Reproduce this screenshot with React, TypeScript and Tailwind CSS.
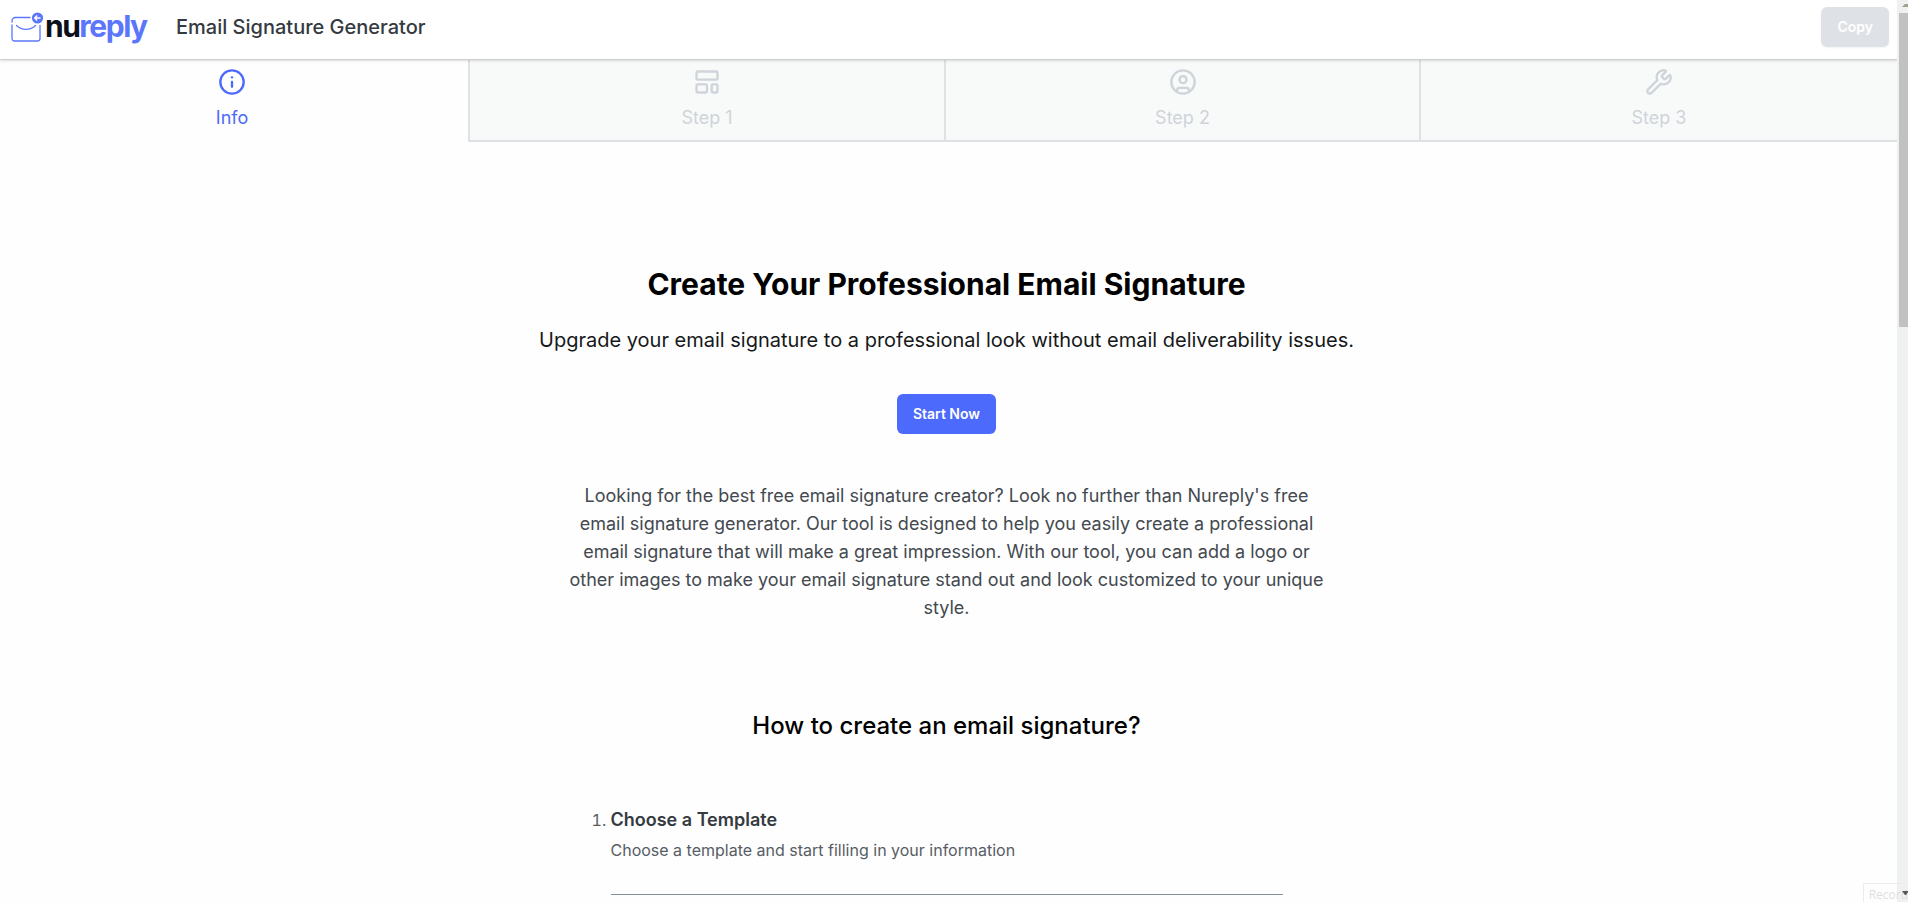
import { CircleUser, Info, LayoutTemplate, Wrench, type LucideIcon } from "lucide-react";

type Step = { label: string; icon: LucideIcon };

const steps: Step[] = [
  { label: "Info", icon: Info },
  { label: "Step 1", icon: LayoutTemplate },
  { label: "Step 2", icon: CircleUser },
  { label: "Step 3", icon: Wrench },
];

function Logo() {
  return (
    <a href="#" aria-label="nureply" className="block">
      <svg width="144" height="48" viewBox="0 0 144 48" fill="none">
        <g transform="translate(1 6)">
          <g stroke="#5b76fb" strokeWidth="1.3" strokeLinecap="round">
            <path d="M1 10V9a3.500 3.500 0 0 1 3.500-3.500H19" />
            <path d="M1 13v13.500a2.500 2.500 0 0 0 2.500 2.500h23a2.500 2.500 0 0 0 2.500-2.500V13.500" />
            <path d="M5.500 13.500c5.500 5.200 13.500 5.200 19 0" />
          </g>
          <circle cx="26.500" cy="6" r="5.600" fill="#5b76fb" />
          <path d="M29.500 6h-5.500M26.200 3.500L23.700 6l2.500 2.500" stroke="#fff" strokeWidth="1.400" />
        </g>
        <text
          x="35"
          y="31"
          className="text-3xl font-bold tracking-tighter"
          fontFamily="Inter, sans-serif"
          fill="#0b0f1c"
        >
          nu<tspan fill="#5b76fb">reply</tspan>
        </text>
      </svg>
    </a>
  );
}

function Header() {
  return (
    <header className="relative z-10 flex h-[60px] shrink-0 items-center border-b border-[#cdcfd1] bg-white pr-2 pl-[10px] shadow-sm">
      <Logo />
      <h1 className="ml-[22px] pb-1.5 text-xl font-medium text-[#343a40]">Email Signature Generator</h1>
      <button
        type="button"
        disabled
        className="mb-1.5 ml-auto h-10 rounded-md bg-[#dee2e6] px-4 text-sm font-semibold text-white shadow-xs"
      >
        Copy
      </button>
    </header>
  );
}

function StepTabs() {
  return (
    <nav className="grid shrink-0 grid-cols-[468fr_476fr_475fr_478fr]">
      {steps.map(({ label, icon: Icon }, index) => (
        <button
          key={label}
          type="button"
          className={
            index === 0
              ? "flex h-[82px] flex-col items-center gap-2 pt-2 pr-1 text-lg font-normal text-[#4c6afb]"
              : "flex h-[82px] flex-col items-center gap-2 border-b-2 border-l-2 border-[#dee2e6] bg-[#f8faf9] pt-2 text-lg font-normal text-[#ced4da]"
          }
        >
          <Icon size={28} />
          {label}
        </button>
      ))}
    </nav>
  );
}

function Scrollbar() {
  return (
    <div className="flex w-[11px] shrink-0 flex-col items-end bg-[#eff1f0]">
      <svg width="9" height="13" viewBox="0 0 9 13">
        <path d="M3 7h6V4H6z" fill="#a3a08c" />
      </svg>
      <div className="h-[314px] w-[9px] bg-[#c1c1c1]" />
      <svg className="relative z-20 mt-auto" width="9" height="13" viewBox="0 0 9 13">
        <path d="M3 2h6v1L7 6H6z" fill="#55555a" />
      </svg>
    </div>
  );
}

export default function App() {
  return (
    <div className="relative flex h-screen overflow-hidden bg-[#fefefe] font-['Inter',sans-serif]">
      <div className="flex min-w-0 flex-1 flex-col overflow-hidden">
        <Header />
        <StepTabs />
        <main className="flex flex-col items-center pt-[120px] pr-1 text-center">
          <h2 className="text-3xl leading-[44px] font-bold text-black">
            Create Your Professional Email Signature
          </h2>
          <p className="mt-[18px] text-xl leading-8 font-normal text-[#16181a]">
            Upgrade your email signature to a professional look without email deliverability issues.
          </p>
          <button
            type="button"
            className="mt-[38px] h-10 rounded-md bg-[#4c6afb] px-4 text-sm font-semibold text-white"
          >
            Start Now
          </button>
          <p className="mt-12 w-[768px] text-lg leading-7 font-normal text-[#43494f]">
            Looking for the best free email signature creator? Look no further than Nureply's free email
            signature generator. Our tool is designed to help you easily create a professional email
            signature that will make a great impression. With our tool, you can add a logo or other images
            to make your email signature stand out and look customized to your unique style.
          </p>
          <h3 className="mt-[86px] text-2xl leading-9 font-medium text-black">
            How to create an email signature?
          </h3>
          <ol className="mt-[58px] w-[672px] list-decimal text-left text-base font-normal text-[#565d64]">
            <li className="border-b border-[#868e96] pb-8">
              <h4 className="text-lg leading-9 font-semibold text-[#343a40]">Choose a Template</h4>
              <p className="leading-6">Choose a template and start filling in your information</p>
            </li>
          </ol>
        </main>
      </div>
      <div className="absolute right-0 bottom-0 z-10 border-t border-l border-[#ececec] pt-1 pl-[5px] font-['Open_Sans',sans-serif] text-xs leading-[14px] text-[#dedede]">
        Record
      </div>
      <Scrollbar />
    </div>
  );
}
